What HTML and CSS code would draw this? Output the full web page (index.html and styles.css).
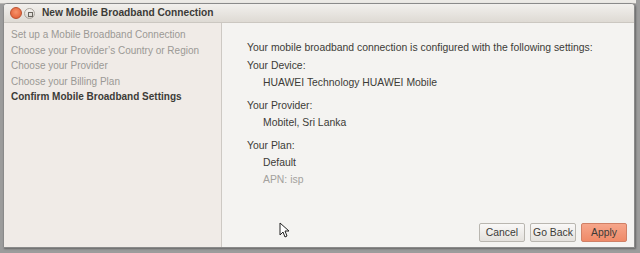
FILE: index.html
```html
<!DOCTYPE html>
<html lang="en">
<head>
    <meta charset="UTF-8">
    <title>New Mobile Broadband Connection</title>
    <link rel="stylesheet" href="styles.css">
</head>
<body>
    <div class="behind"></div>
    <div class="window">
        <div class="titlebar">
            <span class="btn-close"></span>
            <span class="btn-max"></span>
            <span class="title">New Mobile Broadband Connection</span>
        </div>
        <div class="main">
            <ul class="steps">
                <li>Set up a Mobile Broadband Connection</li>
                <li>Choose your Provider’s Country or Region</li>
                <li>Choose your Provider</li>
                <li>Choose your Billing Plan</li>
                <li class="cur">Confirm Mobile Broadband Settings</li>
            </ul>
            <div class="page">
                <p class="intro">Your mobile broadband connection is configured with the following settings:</p>
                <p class="lbl">Your Device:</p>
                <p class="val">HUAWEI Technology HUAWEI Mobile</p>
                <p class="lbl">Your Provider:</p>
                <p class="val">Mobitel, Sri Lanka</p>
                <p class="lbl">Your Plan:</p>
                <p class="val">Default</p>
                <p class="val dim">APN: isp</p>
                <div class="buttons">
                    <button class="btn">Cancel</button>
                    <button class="btn">Go Back</button>
                    <button class="btn apply">Apply</button>
                </div>
                <svg class="cursor" width="12" height="17" viewBox="0 0 12 17">
                    <path d="M1 1 L1 13 L4 10 L6 15 L8 14 L6 9 L10 9 Z" fill="#fff" stroke="#222" stroke-width="1"/>
                </svg>
            </div>
        </div>
    </div>
</body>
</html>
```

FILE: styles.css
```css
*{
    margin:0;
    padding:0;
    box-sizing:border-box;
}
body{
    width:640px;
    height:253px;
    background:#9c9c9c;
    font-family:"Liberation Sans",Arial,sans-serif;
    font-size:10.4px;
    position:relative;
    overflow:hidden;
}
.behind{
    height:4px;
    margin:0 4px 0 0;
    background:#eceae6;
    border-bottom:1px solid #b8b6b2;
}
.window{
    position:absolute;
    left:3px;
    top:3px;
    width:632px;
    height:245px;
    background:#f4f3f1;
    border:1px solid #8a8a8a;
    border-radius:4px 4px 0 0;
    box-shadow:1px 1px 2px rgba(0,0,0,.35);
    display:flex;
    flex-direction:column;
    overflow:hidden;
}
.titlebar{
    height:19px;
    display:flex;
    align-items:center;
    background:linear-gradient(#f2f0ed,#dedad4);
    border-bottom:1px solid #cbc7c1;
    padding-left:6px;
}
.btn-close{
    width:12px;
    height:12px;
    border-radius:50%;
    background:radial-gradient(circle at 50% 40%,#f6936a,#e0572f);
    border:1px solid #b9502f;
    margin-right:2px;
}
.btn-max{
    width:11px;
    height:11px;
    border-radius:50%;
    background:linear-gradient(#f3f1ee,#d9d5cf);
    border:1px solid #aaa59e;
    position:relative;
}
.btn-max::after{
    content:"";
    position:absolute;
    left:3px;
    top:3px;
    width:3px;
    height:3px;
    border:1px solid #6a6760;
}
.title{
    margin-left:7px;
    margin-top:-2px;
    font-weight:bold;
    font-size:10.2px;
    color:#3c3b37;
}
.main{
    flex:1;
    display:flex;
}
.steps{
    list-style:none;
    width:218px;
    background:#f0ebe7;
    border-right:1px solid #cdc9c4;
    padding:4px 0 0 7px;
    font-size:10px;
}
.steps li{
    height:15.5px;
    line-height:15.5px;
    color:#9b9995;
    white-space:nowrap;
}
.steps li.cur{
    color:#3c3b37;
    font-weight:bold;
}
.page{
    flex:1;
    padding:18px 0 0 25px;
    display:flex;
    flex-direction:column;
    position:relative;
    color:#3c3b37;
}
.intro{
    line-height:14px;
    margin-bottom:2px;
    white-space:nowrap;
}
.lbl{
    line-height:17px;
}
.val{
    line-height:17px;
    padding-left:16px;
    margin-bottom:6px;
}
.val + .val{
    margin-top:-6px;
}
.dim{
    color:#a3a19d;
}
.buttons{
    margin-top:auto;
    display:flex;
    justify-content:flex-end;
    gap:5px;
    padding:0 7px 5px 0;
}
.btn{
    font-family:inherit;
    font-size:10.4px;
    color:#3c3b37;
    width:46px;
    height:19px;
    padding:0;
    border:1px solid #b9b6b0;
    border-radius:2px;
    background:linear-gradient(#f9f8f7,#e4e1dd);
}
.apply{
    border-color:#d08066;
    background:linear-gradient(#f6a68b,#ef8a68);
}
.cursor{
    position:absolute;
    left:57px;
    top:199px;
}
```
